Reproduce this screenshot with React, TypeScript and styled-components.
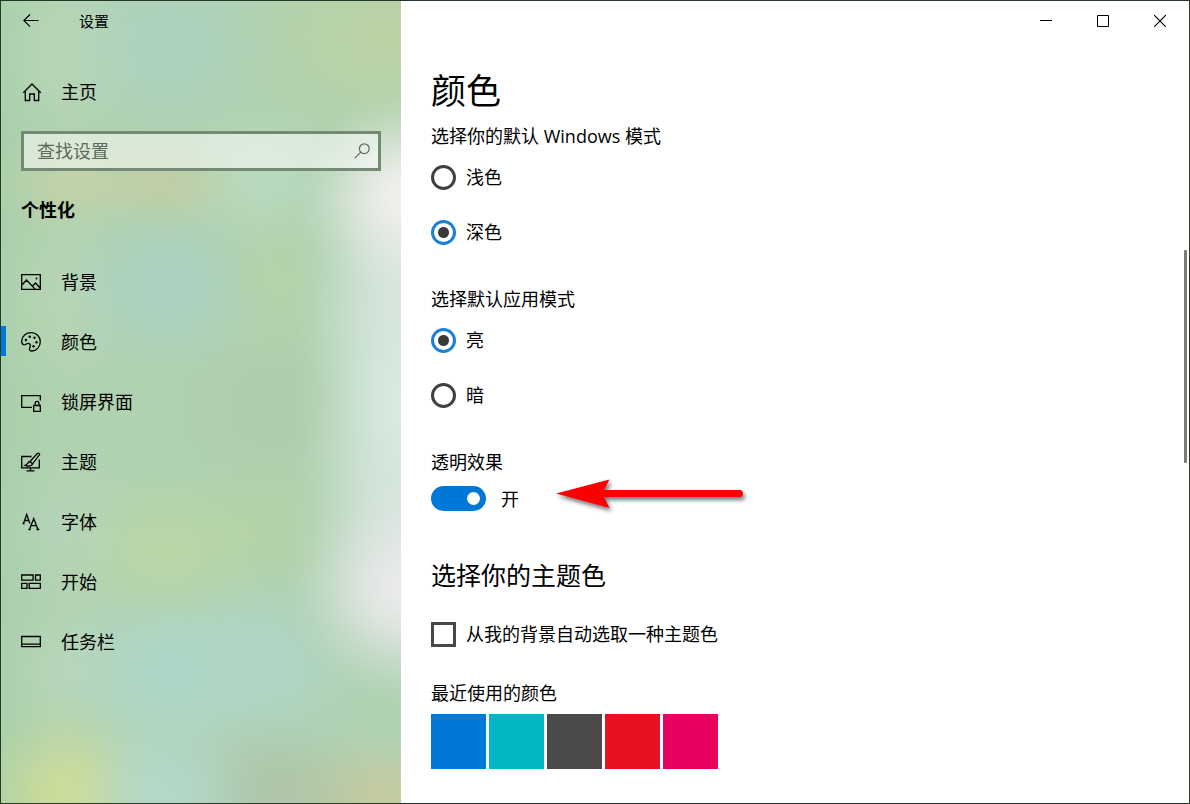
import React, { useState } from "react";
import styled, { createGlobalStyle, css } from "styled-components";

const GlobalStyle = createGlobalStyle`
  * { box-sizing: border-box; }
  body {
    margin: 0;
    background: #fff;
    color: #000;
    font-family: "Open Sans", "Noto Sans CJK SC", sans-serif;
    font-size: 18px;
    line-height: 24px;
  }
  button, input { font: inherit; color: inherit; }
`;

const Window = styled.div`
  display: flex;
  min-height: 100vh;
  border: 1px solid #26382a;
`;

/* A soft spot of colour that fades out along a bell curve. */
const glow = (size: string, at: string, rgb: string, alpha: number) => {
  const stops = [1, 0.92, 0.73, 0.48, 0.26, 0.1, 0]
    .map((k, i) => `rgba(${rgb}, ${(k * alpha).toFixed(3)}) ${Math.round((i * 100) / 6)}%`)
    .join(", ");
  return `radial-gradient(${size} at ${at}, ${stops})`;
};

const acrylic = [
  glow("110px 100px", "405px 195px", "243, 240, 238", 0.95),
  glow("120px 110px", "405px 590px", "238, 236, 238", 0.9),
  glow("120px 190px", "410px 270px", "224, 234, 232", 0.75),
  glow("120px 210px", "410px 400px", "222, 238, 230", 0.85),
  glow("120px 190px", "410px 520px", "220, 228, 230", 0.75),
  glow("120px 110px", "165px 45px", "170, 210, 200", 0.6),
  glow("170px 130px", "385px 35px", "189, 210, 160", 0.75),
  glow("90px 60px", "72px 182px", "204, 210, 165", 0.6),
  glow("90px 60px", "162px 182px", "200, 204, 160", 0.6),
  glow("100px 80px", "258px 175px", "194, 224, 200", 0.55),
  glow("120px 100px", "165px 285px", "168, 208, 198", 0.75),
  glow("90px 90px", "265px 280px", "186, 212, 162", 0.5),
  glow("120px 110px", "272px 405px", "174, 200, 168", 0.6),
  glow("120px 90px", "165px 550px", "190, 216, 162", 0.65),
  glow("100px 80px", "262px 525px", "184, 210, 160", 0.5),
  glow("120px 110px", "165px 670px", "174, 216, 206", 0.8),
  glow("120px 110px", "260px 665px", "176, 214, 204", 0.75),
  glow("110px 110px", "165px 795px", "180, 218, 208", 0.8),
  glow("110px 100px", "70px 792px", "210, 222, 148", 0.85),
  glow("130px 100px", "265px 790px", "174, 194, 166", 0.8),
  glow("110px 70px", "375px 798px", "200, 202, 158", 0.9),
  glow("90px 110px", "65px 50px", "188, 216, 186", 0.6),
  glow("90px 110px", "65px 300px", "188, 214, 182", 0.6),
  glow("90px 110px", "70px 530px", "184, 212, 188", 0.6),
  glow("90px 90px", "70px 670px", "188, 216, 190", 0.6),
  "linear-gradient(90deg, #a9d0ab 0, #b0d2b0 60px, #b0d2b2 100%)",
].join(", ");

const Sidebar = styled.aside`
  flex: 0 0 400px;
  background: ${acrylic};
`;

const SidebarBar = styled.div`
  display: flex;
  align-items: center;
  height: 40px;
  font-size: 15px;
`;

const BackButton = styled.button`
  display: grid;
  place-items: center;
  width: 60px;
  height: 40px;
  margin-right: 18px;
  padding: 0;
  border: 0;
  background: none;
`;

const rowLayout = css`
  display: flex;
  align-items: center;
  gap: 20px;
  padding-left: 20px;
  color: #000;
  text-decoration: none;
`;

const HomeLink = styled.a`
  ${rowLayout}
  height: 50px;
  margin-top: 26px;
`;

const SearchBox = styled.label`
  display: flex;
  align-items: center;
  height: 40px;
  margin: 14px 20px 0;
  padding: 0 8px 0 13px;
  border: 3px solid #758a74;
  background: rgba(255, 255, 255, 0.5);
  color: #5c6b5c;
`;

const SearchInput = styled.input`
  flex: 1;
  min-width: 0;
  padding: 0;
  border: 0;
  outline: 0;
  background: none;
  &::placeholder { color: #5c6b5c; opacity: 1; }
`;

const SectionName = styled.h2`
  margin: 19px 20px 0;
  font-size: 18px;
  font-weight: 700;
  line-height: 40px;
`;

const Nav = styled.nav`
  padding-top: 22px;
`;

const NavLink = styled.a<{ $active?: boolean }>`
  ${rowLayout}
  height: 60px;
  background: ${(p) =>
    p.$active ? "linear-gradient(#0078d7, #0078d7) left 0 top 14px / 5px 30px no-repeat" : "none"};
`;

const Icon = styled.svg`
  flex: none;
  fill: none;
  stroke: currentColor;
`;

const Content = styled.div`
  display: flex;
  flex: 1;
  flex-direction: column;
  min-width: 0;
`;

const WindowControls = styled.div`
  display: flex;
  justify-content: flex-end;
  padding-right: 1px;
`;

const ControlButton = styled.button`
  display: grid;
  place-items: center;
  width: 57px;
  height: 40px;
  padding: 0;
  border: 0;
  background: none;
`;

const Body = styled.div`
  display: flex;
  flex: 1;
`;

const Main = styled.main`
  flex: 1;
  padding: 25px 30px 34px;
`;

const ScrollTrack = styled.div`
  display: flex;
  flex-direction: column;
  width: 5px;
  &::before { content: ""; flex: 209; }
  &::after { content: ""; flex: 340; }
`;

const ScrollThumb = styled.div`
  flex: 213;
  width: 3px;
  border-radius: 1px;
  background: #7a7a7a;
`;

const PageTitle = styled.h1`
  margin: 0 0 8px;
  font-size: 35px;
  font-weight: 400;
  line-height: 50px;
`;

const Group = styled.fieldset`
  display: flex;
  flex-direction: column;
  gap: 29px;
  margin: 0 0 42px;
  padding: 0;
  border: 0;
`;

const GroupLabel = styled.legend`
  margin: 0 0 16px;
  padding: 0;
`;

const Field = styled.div`
  margin: 0 0 12px;
`;

const SubTitle = styled.h2`
  margin: 47px 0 29px;
  font-size: 25px;
  font-weight: 400;
  line-height: 34px;
`;

const Option = styled.label`
  display: flex;
  align-items: center;
  gap: 10px;
  height: 26px;
`;

const Radio = styled.input`
  flex: none;
  width: 25px;
  height: 25px;
  margin: 0;
  appearance: none;
  border: 3px solid #404040;
  border-radius: 50%;
  background: #fff;
  &:checked {
    border-color: #1a80d8;
    background: radial-gradient(circle, #3a3a3a 5px, #fff 6px);
  }
`;

const Checkbox = styled.input`
  flex: none;
  width: 25px;
  height: 25px;
  margin: 0;
  appearance: none;
  border: 3px solid #484848;
  background: #fff;
  &:checked { background: #0078d7; }
`;

const ToggleRow = styled.div`
  position: relative;
  display: flex;
`;

const ToggleLabel = styled.label`
  display: flex;
  align-items: center;
  gap: 15px;
  height: 25px;
`;

const Toggle = styled.input`
  display: flex;
  align-items: center;
  width: 55px;
  height: 25px;
  margin: 0;
  padding: 0 6px;
  appearance: none;
  border-radius: 13px;
  background: #777;
  &::before {
    content: "";
    width: 13px;
    height: 13px;
    border-radius: 50%;
    background: #fff;
  }
  &:checked { justify-content: flex-end; background: #0078d7; }
`;

const Arrow = styled.svg`
  position: absolute;
  top: -12px;
  left: 120px;
`;

const RecentLabel = styled.h3`
  margin: 34px 0 9px;
  font-size: 18px;
  font-weight: 400;
  line-height: 24px;
`;

const Swatches = styled.div`
  display: flex;
  flex-wrap: wrap;
  gap: 3px;
`;

const Swatch = styled.button<{ $color: string }>`
  width: 55px;
  height: 55px;
  padding: 0;
  border: 0;
  background: ${(p) => p.$color};
`;

const icons = {
  home: (
    <path d="M2.300 10.700 11 2l8.700 8.700M4.300 9v9.500h4.400v-6.500h4.600v6.500h4.400V9" />
  ),
  picture: (
    <>
      <path d="M.7 2.700h18.600v14.600H.7zM1 13l4.500-5 8.500 9M11.500 14l3-3 4.500 5" />
      <circle cx="15.500" cy="6.500" r=".9" fill="currentColor" stroke="none" />
    </>
  ),
  palette: (
    <>
      <path d="M.7 8.800C1 4 5 .7 10.200.7c5 0 9.100 3.800 9.100 8.800s-3.600 9.500-8.300 9.500c-2 0-2.700-1-2.500-2.300.2-1.200 1-2 .8-3.500-.2-1.600-1.800-2.200-3.300-1.500-1.200.5-1.800 1.200-3 1.100C1.400 12.700.6 10.800.7 8.800z" />
      <g fill="currentColor" stroke="none">
        <circle cx="4.900" cy="8" r="1.200" />
        <circle cx="8.700" cy="4.700" r="1.200" />
        <circle cx="13.500" cy="5.700" r="1.200" />
        <circle cx="15.500" cy="10.200" r="1.200" />
        <circle cx="12.500" cy="14.200" r="1.200" />
      </g>
    </>
  ),
  lock: (
    <path d="M11 15.300H.7V3.700h18.600v4.800M12.700 13.500h6.600v5.800h-6.600zM14.200 13.500v-2.200c0-2.600 3.700-2.600 3.700 0v2.200" />
  ),
  themes: (
    <>
      <path d="M10.500 4.500H.7v11.300h17.600V7.500M9.500 15.800v3M5.500 18.800h8" />
      <path d="M9 9.500 16.300 1.500c1.200-1.100 3 .3 1.900 1.700L11.500 11.800M9 9.500l2.500 2.300M9 9.500c-2.300.3-2 3.300-4.800 3.800 3.200 1.500 7 .8 7.300-1.500z" />
    </>
  ),
  fonts: (
    <path d="M2.500 11.500 5.700 2.500 8.900 11.500M3.700 8.500h4.100M1.500 11.500h2M8.500 17.500 12.700 6.500 17 17.500M10 13.700h5.500M7.300 17.500h2.400M15.500 17.500H18.300" />
  ),
  start: (
    <path d="M.7 3h11.400v5.200H.7zM14.500 3h4.800v5.200h-4.800zM.7 11.300h5.300v5H.7zM8.200 11.300h11.100v5H8.200z" />
  ),
  taskbar: (
    <path d="M.7 4.500h18.600v10.200H.7zM.7 12.200h18.600" />
  ),
};

type IconName = keyof typeof icons;

const RowIcon = ({ name }: { name: IconName }) => (
  <Icon width="20" height="20" viewBox="0 0 20 20" strokeWidth="1.3" aria-hidden="true">
    {icons[name]}
  </Icon>
);

const navItems: { icon: IconName; label: string }[] = [
  { icon: "picture", label: "背景" },
  { icon: "palette", label: "颜色" },
  { icon: "lock", label: "锁屏界面" },
  { icon: "themes", label: "主题" },
  { icon: "fonts", label: "字体" },
  { icon: "start", label: "开始" },
  { icon: "taskbar", label: "任务栏" },
];

const recentColors = [
  { name: "蓝色", value: "#0078d7" },
  { name: "青色", value: "#00b7c3" },
  { name: "灰色", value: "#4c4a48" },
  { name: "红色", value: "#e81123" },
  { name: "玫红", value: "#ea005e" },
];

interface RadioGroupProps {
  legend: string;
  name: string;
  options: string[];
  initial: string;
}

function RadioGroup({ legend, name, options, initial }: RadioGroupProps) {
  const [value, setValue] = useState(initial);
  return (
    <Group>
      <GroupLabel>{legend}</GroupLabel>
      {options.map((option) => (
        <Option key={option}>
          <Radio
            type="radio"
            name={name}
            checked={value === option}
            onChange={() => setValue(option)}
          />
          {option}
        </Option>
      ))}
    </Group>
  );
}

export default function App() {
  const [transparent, setTransparent] = useState(true);
  const [auto, setAuto] = useState(false);

  return (
    <>
      <GlobalStyle />
      <Window>
        <Sidebar>
          <SidebarBar>
            <BackButton aria-label="返回">
              <Icon width="16" height="14" viewBox="0 0 16 14" strokeWidth="1.200">
                <path d="M15.500 6.500H1M7 .5.8 6.500 7 12.700" />
              </Icon>
            </BackButton>
            设置
          </SidebarBar>
          <HomeLink href="#home">
            <RowIcon name="home" />
            主页
          </HomeLink>
          <SearchBox>
            <SearchInput type="text" placeholder="查找设置" aria-label="查找设置" />
            <Icon width="16" height="16" viewBox="0 0 16 16" strokeWidth="1.200">
              <circle cx="10.300" cy="5.700" r="4.900" />
              <path d="M6.800 9.200.6 15.400" />
            </Icon>
          </SearchBox>
          <SectionName>个性化</SectionName>
          <Nav>
            {navItems.map((item) => (
              <NavLink key={item.icon} href={`#${item.icon}`} $active={item.icon === "palette"}>
                <RowIcon name={item.icon} />
                {item.label}
              </NavLink>
            ))}
          </Nav>
        </Sidebar>
        <Content>
          <WindowControls>
            <ControlButton aria-label="最小化">
              <Icon width="12" height="12" viewBox="0 0 12 12">
                <path d="M0 5.500h12" />
              </Icon>
            </ControlButton>
            <ControlButton aria-label="最大化">
              <Icon width="12" height="12" viewBox="0 0 12 12">
                <path d="M.5.5h11v11H.5z" />
              </Icon>
            </ControlButton>
            <ControlButton aria-label="关闭">
              <Icon width="12" height="12" viewBox="0 0 12 12" strokeWidth="1.200">
                <path d="m0 0 12 12M12 0 0 12" />
              </Icon>
            </ControlButton>
          </WindowControls>
          <Body>
            <Main>
              <PageTitle>颜色</PageTitle>
              <RadioGroup
                legend="选择你的默认 Windows 模式"
                name="windows-mode"
                options={["浅色", "深色"]}
                initial="深色"
              />
              <RadioGroup
                legend="选择默认应用模式"
                name="app-mode"
                options={["亮", "暗"]}
                initial="亮"
              />
              <Field id="transparency">透明效果</Field>
              <ToggleRow>
                <ToggleLabel>
                  <Toggle
                    type="checkbox"
                    role="switch"
                    aria-describedby="transparency"
                    checked={transparent}
                    onChange={() => setTransparent(!transparent)}
                  />
                  {transparent ? "开" : "关"}
                </ToggleLabel>
                <Arrow width="204" height="44" viewBox="0 0 204 44" aria-hidden="true">
                  <defs>
                    <filter id="shadow" x="-10%" y="-30%" width="120%" height="180%">
                      <feDropShadow dx="2" dy="3" stdDeviation="2" floodColor="#000" floodOpacity=".55" />
                    </filter>
                  </defs>
                  <path
                    d="M5 19.500 58.500 5.500 53 16H188.500a3.300 3.300 0 0 1 0 7H53L58.500 34z"
                    fill="#fb0000"
                    filter="url(#shadow)"
                  />
                </Arrow>
              </ToggleRow>
              <SubTitle>选择你的主题色</SubTitle>
              <Option>
                <Checkbox type="checkbox" checked={auto} onChange={() => setAuto(!auto)} />
                从我的背景自动选取一种主题色
              </Option>
              <RecentLabel>最近使用的颜色</RecentLabel>
              <Swatches>
                {recentColors.map((color) => (
                  <Swatch key={color.value} $color={color.value} aria-label={color.name} />
                ))}
              </Swatches>
            </Main>
            <ScrollTrack>
              <ScrollThumb />
            </ScrollTrack>
          </Body>
        </Content>
      </Window>
    </>
  );
}
